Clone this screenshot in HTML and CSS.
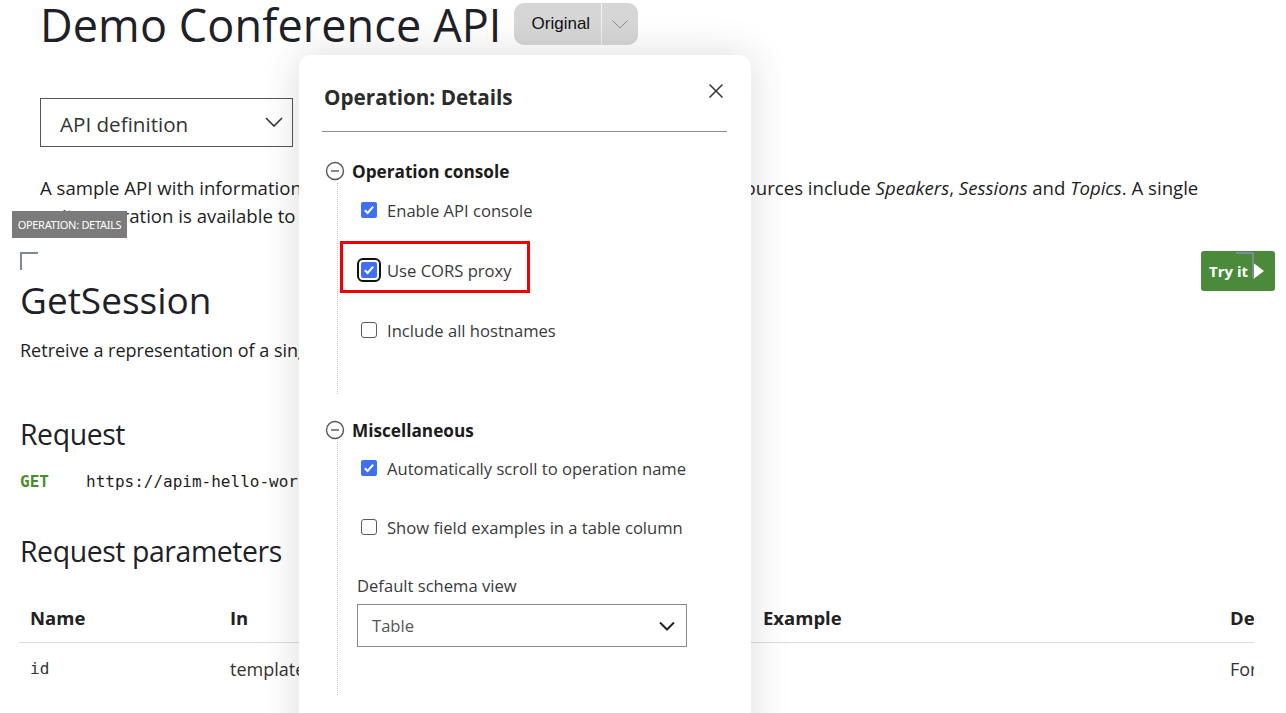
FILE: index.html
```html
<!DOCTYPE html>
<html lang="en">
<head>
<meta charset="utf-8">
<title>Demo Conference API</title>
<link rel="stylesheet" href="styles.css">
</head>
<body>
<div class="page">
  <header class="api-header">
    <div class="title-row">
      <h1 class="api-title">Demo Conference API</h1>
      <div class="version-btn">
        <span class="version-label">Original</span>
        <span class="version-caret"><svg width="16" height="9" viewBox="0 0 16 9"><path d="M0.5 0.5 L8 8 L15.5 0.5" fill="none" stroke="#8a8a8a" stroke-width="1"/></svg></span>
      </div>
    </div>
    <div class="def-select">
      <span>API definition</span>
      <svg width="18" height="10" viewBox="0 0 18 10"><path d="M1 1 L9 9 L17 1" fill="none" stroke="#333" stroke-width="1.6"/></svg>
    </div>
    <p class="api-desc">A sample API with information related to a technical conference. The available resources include <em>Speakers</em>, <em>Sessions</em> and <em>Topics</em>. A single write operation is available to provide feedback on a session.</p>
  </header>

  <section class="operation">
    <span class="widget-tag">OPERATION: DETAILS</span>
    <span class="corner corner-tl"></span>
    <span class="corner corner-tr"></span>
    <div class="op-head">
      <h2 class="op-name">GetSession</h2>
      <button class="try-btn">Try it <svg width="11" height="16" viewBox="0 0 11 16"><path d="M0.5 0 L11 8 L0.5 16 Z" fill="#fff"/></svg></button>
    </div>
    <p class="op-desc">Retreive a representation of a single session.</p>
    <h3 class="sub-title">Request</h3>
    <div class="request-line"><span class="method">GET</span><span class="url">https://apim-hello-world.azure-api.net/conference/session/{id}</span></div>
    <h3 class="sub-title">Request parameters</h3>
    <div class="table-wrap">
      <table class="params">
        <thead>
          <tr><th class="c-name">Name</th><th class="c-in">In</th><th class="c-ex">Example</th><th class="c-desc">Description</th></tr>
        </thead>
        <tbody>
          <tr><td class="mono">id</td><td>template</td><td></td><td>Format - int32.</td></tr>
        </tbody>
      </table>
    </div>
  </section>
</div>

<div class="popup">
  <div class="popup-head">
    <h2 class="popup-title">Operation: Details</h2>
    <button class="close-btn" aria-label="Close"><svg width="14" height="14" viewBox="0 0 14 14"><path d="M0.5 0.5 L13.5 13.5 M13.5 0.5 L0.5 13.5" stroke="#333" stroke-width="1.5"/></svg></button>
  </div>
  <hr class="popup-rule">

  <div class="section section-console">
    <div class="section-head">
      <svg class="collapse-icon" width="20" height="20" viewBox="0 0 20 20"><circle cx="10" cy="10" r="8.5" fill="none" stroke="#555" stroke-width="1.4"/><path d="M6 10 H14" stroke="#555" stroke-width="1.4"/></svg>
      <span class="section-title">Operation console</span>
    </div>
    <div class="section-body body-console">
      <label class="check-row"><span class="box checked"><svg width="16" height="16" viewBox="0 0 16 16"><path d="M3.8 8.3 L6.6 11 L12.2 4.6" fill="none" stroke="#fff" stroke-width="2"/></svg></span><span class="check-label">Enable API console</span></label>
      <label class="check-row"><span class="box checked focused"><svg width="16" height="16" viewBox="0 0 16 16"><path d="M3.8 8.3 L6.6 11 L12.2 4.6" fill="none" stroke="#fff" stroke-width="2"/></svg></span><span class="check-label">Use CORS proxy</span></label>
      <label class="check-row"><span class="box"></span><span class="check-label">Include all hostnames</span></label>
      <span class="highlight"></span>
    </div>
  </div>

  <div class="section section-misc">
    <div class="section-head">
      <svg class="collapse-icon" width="20" height="20" viewBox="0 0 20 20"><circle cx="10" cy="10" r="8.5" fill="none" stroke="#555" stroke-width="1.4"/><path d="M6 10 H14" stroke="#555" stroke-width="1.4"/></svg>
      <span class="section-title">Miscellaneous</span>
    </div>
    <div class="section-body body-misc">
      <label class="check-row"><span class="box checked"><svg width="16" height="16" viewBox="0 0 16 16"><path d="M3.8 8.3 L6.6 11 L12.2 4.6" fill="none" stroke="#fff" stroke-width="2"/></svg></span><span class="check-label">Automatically scroll to operation name</span></label>
      <label class="check-row"><span class="box"></span><span class="check-label">Show field examples in a table column</span></label>
      <div class="field">
        <span class="field-label">Default schema view</span>
        <div class="schema-select"><span>Table</span><svg width="16" height="10" viewBox="0 0 16 10"><path d="M1 1.5 L8 8.5 L15 1.5" fill="none" stroke="#222" stroke-width="2"/></svg></div>
      </div>
    </div>
  </div>
</div>
</body>
</html>
```

FILE: styles.css
```css
* { box-sizing: border-box; }

html, body {
  margin: 0;
  padding: 0;
  background: #fff;
  overflow: hidden;
  height: 713px;
}

body {
  font-family: "Open Sans", "Noto Sans", sans-serif;
  color: #1f1f1f;
  position: relative;
}

.page {
  width: 1286px;
}

/* Header */
.api-header {
  padding-left: 40px;
}

.title-row {
  display: flex;
  align-items: center;
  gap: 12px;
}

.api-title {
  margin: 0;
  font-size: 45px;
  font-weight: 400;
  line-height: 50px;
  color: #1e2127;
  letter-spacing: 0.1px;
}

.version-btn {
  display: flex;
  align-items: stretch;
  height: 42px;
  margin-top: -2px;
  background: #d6d6d6;
  border-radius: 10px;
  overflow: hidden;
}

.version-label {
  display: flex;
  align-items: center;
  padding: 0 11px 0 18px;
  font-family: "Liberation Sans", Arial, sans-serif;
  font-size: 17px;
  color: #111;
  border-right: 1px solid #f2f2f2;
}

.version-caret {
  display: flex;
  align-items: center;
  padding: 0 10px 0 10px;
}

.def-select {
  margin-top: 48px;
  width: 253px;
  height: 49px;
  border: 1px solid #555;
  display: flex;
  align-items: center;
  justify-content: space-between;
  padding: 3px 9px 0 19px;
  font-size: 20.6px;
  color: #333;
}

.def-select svg {
  margin-top: -4px;
}

.api-desc {
  margin: 27px 0 0;
  font-size: 18.6px;
  line-height: 28px;
  color: #1e1e1e;
  padding-right: 71px;
}

/* Operation */
.operation {
  position: relative;
  margin-top: 21px;
  padding: 0 11px 0 19px;
}

.widget-tag {
  position: absolute;
  left: 12px;
  top: -40px;
  width: 115px;
  height: 27px;
  background: #7b7b7b;
  color: #fff;
  font-family: "Noto Sans", sans-serif;
  font-size: 11px;
  line-height: 27px;
  text-align: center;
  letter-spacing: -0.3px;
}

.corner {
  position: absolute;
  width: 18px;
  height: 18px;
  border-top: 2px solid #7d8a98;
}

.corner-tl {
  left: 20px;
  top: 1px;
  border-left: 2px solid #7d8a98;
}

.corner-tr {
  right: 32px;
  top: 1px;
  height: 26px;
  border-right: 2px solid #7d8a98;
  z-index: 2;
}

.op-head {
  display: flex;
  justify-content: space-between;
  align-items: flex-start;
}

.op-name {
  margin: 26px 0 0 1px;
  font-size: 37px;
  font-weight: 400;
  line-height: 46px;
  color: #1e2127;
}

.try-btn {
  height: 40px;
  width: 74px;
  background: #4a8a3a;
  border: none;
  border-radius: 3px;
  color: #fff;
  font-family: "Open Sans", sans-serif;
  font-weight: 700;
  font-size: 15px;
  display: flex;
  align-items: center;
  gap: 5px;
  padding: 0 0 0 8px;
}

.op-desc {
  margin: 13px 0 0 1px;
  font-size: 18px;
  line-height: 28px;
  color: #1e1e1e;
}

.sub-title {
  margin: 52px 0 0 1px;
  font-size: 28.4px;
  font-weight: 400;
  line-height: 36px;
  color: #1e2127;
  letter-spacing: -0.4px;
}

.request-line {
  margin: 18px 0 0 1px;
  font-family: "DejaVu Sans Mono", "Liberation Mono", monospace;
  font-size: 16px;
  line-height: 24px;
  white-space: nowrap;
  color: #1e1e1e;
}

.method {
  display: inline-block;
  width: 66px;
  font-weight: 700;
  color: #4b8b2b;
}

.request-line + .sub-title {
  margin-top: 39px;
}

.table-wrap {
  margin-top: 25px;
  width: 1235px;
  overflow: hidden;
}

.params {
  width: 1320px;
  border-collapse: collapse;
  table-layout: fixed;
}

.params th, .params td {
  padding: 12px 11px;
  text-align: left;
  line-height: 24px;
  font-size: 18px;
  white-space: nowrap;
}

.params th {
  font-weight: 700;
  font-size: 18.5px;
  color: #222;
  border-bottom: 1px solid #dcdcdc;
}

.params td {
  color: #333;
  padding-top: 14px;
}

.c-name { width: 200px; }
.c-in { width: 533px; }
.c-ex { width: 467px; }
.c-desc { width: 120px; }

.mono {
  font-family: "DejaVu Sans Mono", "Liberation Mono", monospace;
  font-size: 16px !important;
}

/* Popup */
.popup {
  position: absolute;
  left: 299px;
  top: 55px;
  width: 452px;
  height: 700px;
  background: #fff;
  border-radius: 12px;
  box-shadow: 0 0 40px rgba(0, 0, 0, 0.14);
  padding: 28px 24px 0 24px;
  z-index: 5;
}

.popup-head {
  display: flex;
  justify-content: space-between;
  align-items: flex-start;
}

.popup-title {
  margin: 0;
  font-size: 20.7px;
  font-weight: 700;
  line-height: 28px;
  color: #2b2b2b;
  padding-left: 1px;
}

.close-btn {
  border: none;
  background: none;
  padding: 0;
  margin: 1px 4px 0 0;
  width: 14px;
  height: 14px;
  display: block;
}

.popup-rule {
  margin: 20px 0 0 -1px;
  border: none;
  border-top: 1px solid #8c8c8c;
}

.section-console {
  margin-top: 29px;
}

.section-misc {
  margin-top: 26px;
}

.section-head {
  display: flex;
  align-items: center;
  gap: 7px;
  height: 20px;
  padding-left: 2px;
}

.collapse-icon {
  display: block;
}

.section-title {
  font-size: 17.2px;
  font-weight: 700;
  color: #1c1c1c;
}

.section-body {
  position: relative;
  margin: 2px 0 0 14px;
  border-left: 1px dotted #c8c8c8;
  padding-left: 19px;
  display: flex;
  flex-direction: column;
}

.body-console {
  padding-top: 15px;
  padding-bottom: 52px;
  gap: 36px;
}

.body-misc {
  padding-top: 14px;
  padding-bottom: 48px;
  gap: 35px;
}

.check-row {
  display: flex;
  align-items: center;
  gap: 10px;
  height: 24px;
  padding-left: 4px;
}

.box {
  width: 16px;
  height: 16px;
  border-radius: 3px;
  border: 1.5px solid #5a5a5a;
  background: #fff;
  flex: none;
  display: block;
}

.box svg {
  display: block;
}

.box.checked {
  border: none;
  background: #3f6ff2;
  border-radius: 2px;
}

.box.focused {
  outline: 2px solid #111;
  outline-offset: 2px;
  border-radius: 2px;
}

.check-label {
  font-size: 16.6px;
  color: #3a3a3a;
}

.highlight {
  position: absolute;
  left: 2px;
  top: 58px;
  width: 190px;
  height: 52px;
  border: 3px solid #f00000;
}

.field {
  display: flex;
  flex-direction: column;
  gap: 6px;
}

.field-label {
  font-size: 16.6px;
  line-height: 24px;
  color: #3a3a3a;
}

.schema-select {
  width: 330px;
  height: 43px;
  border: 1px solid #8a8a8a;
  display: flex;
  align-items: center;
  justify-content: space-between;
  padding: 0 11px 0 14px;
  font-size: 16.6px;
  color: #555;
}
```
